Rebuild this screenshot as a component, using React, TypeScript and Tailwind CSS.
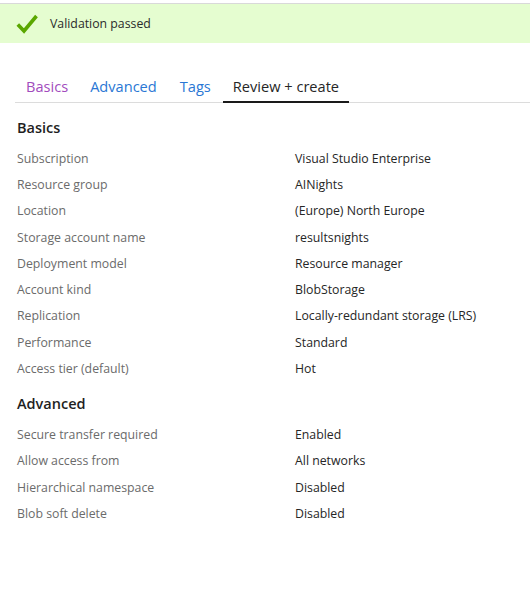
import React from 'react';

type Row = { label: string; value: string };

const basics: Row[] = [
  { label: 'Subscription', value: 'Visual Studio Enterprise' },
  { label: 'Resource group', value: 'AINights' },
  { label: 'Location', value: '(Europe) North Europe' },
  { label: 'Storage account name', value: 'resultsnights' },
  { label: 'Deployment model', value: 'Resource manager' },
  { label: 'Account kind', value: 'BlobStorage' },
  { label: 'Replication', value: 'Locally-redundant storage (LRS)' },
  { label: 'Performance', value: 'Standard' },
  { label: 'Access tier (default)', value: 'Hot' },
];

const advanced: Row[] = [
  { label: 'Secure transfer required', value: 'Enabled' },
  { label: 'Allow access from', value: 'All networks' },
  { label: 'Hierarchical namespace', value: 'Disabled' },
  { label: 'Blob soft delete', value: 'Disabled' },
];

const Section: React.FC<{ title: string; rows: Row[] }> = ({ title, rows }) => (
  <div>
    <h3 className="text-[14.5px] font-semibold text-[#1f1f1f] h-[36px] leading-[36px]">{title}</h3>
    {rows.map((row) => (
      <div key={row.label} className="flex h-[26.25px] items-center text-[12.3px]">
        <div className="w-[278px] text-[#6b6b6b]">{row.label}</div>
        <div className="text-[#262626]">{row.value}</div>
      </div>
    ))}
  </div>
);

const App: React.FC = () => {
  return (
    <div
      className="w-[530px] h-[591px] bg-white overflow-hidden"
      style={{ fontFamily: '"Open Sans", "Noto Sans", sans-serif' }}
    >
      <div className="mt-[3px] h-[1px] bg-[#d9d9d9]" />
      <div className="h-[39px] bg-[#e5fdd0] flex items-center pl-[16px] pt-[2px]">
        <svg width="22" height="20" viewBox="0 0 22 20" className="mr-[12px] -mt-[2px]">
          <path d="M1.8 10.5 L8 17 L20.5 2" fill="none" stroke="#5aa700" strokeWidth="3.6" strokeLinejoin="miter" />
        </svg>
        <span className="text-[12.3px] text-[#2b2b2b]">Validation passed</span>
      </div>

      <div className="ml-[15px] mt-[33px] flex border-b border-[#dcdcdc] h-[27px] text-[14.6px]">
        <div className="pl-[11px] pr-[11px] text-[#a24bbd]">Basics</div>
        <div className="pl-[11px] pr-[11px] text-[#2a77d4]">Advanced</div>
        <div className="pl-[12px] pr-[12px] text-[#2a77d4]">Tags</div>
        <div className="px-[10px] text-[#262626] border-b-2 border-[#1a1a1a] -mb-px">Review + create</div>
      </div>

      <div className="pl-[17px] pt-[7px]">
        <Section title="Basics" rows={basics} />
        <div className="h-[4px]" />
        <Section title="Advanced" rows={advanced} />
      </div>
    </div>
  );
};

export default App;
